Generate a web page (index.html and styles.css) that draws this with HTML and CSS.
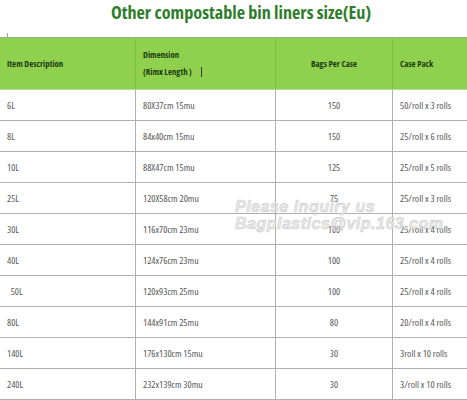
FILE: index.html
```
<!DOCTYPE html>
<html>
<head>
<meta charset="utf-8">
<link rel="stylesheet" href="styles.css">
</head>
<body>
<div class="page">
  <h1 class="title">Other compostable bin liners size(Eu)</h1>
  <div class="tick"></div>
  <table class="sizes">
    <colgroup>
      <col class="c1"><col class="c2"><col class="c3"><col class="c4">
    </colgroup>
    <thead>
      <tr>
        <th>Item Description</th>
        <th class="dim"><div>Dimension</div><div>(Rimx Length）<span class="cursor"></span></div></th>
        <th class="num">Bags Per Case</th>
        <th>Case Pack</th>
      </tr>
    </thead>
    <tbody>
      <tr><td>6L</td><td>80X37cm 15mu</td><td class="num">150</td><td>50/roll x 3 rolls</td></tr>
      <tr><td>8L</td><td>84x40cm 15mu</td><td class="num">150</td><td>25/roll x 6 rolls</td></tr>
      <tr><td>10L</td><td>88X47cm 15mu</td><td class="num">125</td><td>25/roll x 5 rolls</td></tr>
      <tr><td>25L</td><td>120X58cm 20mu</td><td class="num">75</td><td>25/roll x 3 rolls</td></tr>
      <tr><td>30L</td><td>116x70cm 23mu</td><td class="num">100</td><td>25/roll x 4 rolls</td></tr>
      <tr><td>40L</td><td>124x76cm 23mu</td><td class="num">100</td><td>25/roll x 4 rolls</td></tr>
      <tr><td>&nbsp;&nbsp;50L</td><td>120x93cm 25mu</td><td class="num">100</td><td>25/roll x 4 rolls</td></tr>
      <tr><td>80L</td><td>144x91cm 25mu</td><td class="num">80</td><td>20/roll x 4 rolls</td></tr>
      <tr><td>140L</td><td>176x130cm 15mu</td><td class="num">30</td><td>3roll x 10 rolls</td></tr>
      <tr><td>240L</td><td>232x139cm 30mu</td><td class="num">30</td><td>3/roll x 10 rolls</td></tr>
    </tbody>
  </table>
  <div class="watermark">
    <div>Please inquiry us</div>
    <div>Bagplastics@vip.163.com</div>
  </div>
</div>
</body>
</html>
```

FILE: styles.css
```
html, body {
  margin: 0;
  padding: 0;
  background: #ffffff;
  overflow: hidden;
}
.page {
  position: relative;
  width: 467px;
  height: 400px;
  overflow: hidden;
}
.title {
  margin: 0;
  height: 33px;
  padding-left: 15px;
  text-align: center;
  font-family: "Open Sans", "Liberation Sans", sans-serif;
  font-stretch: 75%;
  font-weight: 700;
  font-size: 18.2px;
  line-height: 24px;
  color: #2e7d2b;
}
.tick {
  width: 1px;
  height: 4px;
  margin-left: 7px;
  background: #a0a0a0;
}
.sizes {
  border-collapse: collapse;
  table-layout: fixed;
  width: 520px;
  margin-left: -1px;
  font-family: "Open Sans", "Liberation Sans", sans-serif;
  font-stretch: 75%;
}
.c1 { width: 136px; }
.c2 { width: 140px; }
.c3 { width: 117px; }
.c4 { width: 127px; }
.sizes th {
  height: 51px;
  padding: 0 0 0 7px;
  background: #8fd14f;
  border-top: 1px solid #9aa890;
  border-left: 1px solid #7fbf45;
  border-bottom: 1px solid #b8d8a0;
  text-align: left;
  font-size: 8.8px;
  font-weight: 700;
  color: #1d3a10;
}
.sizes th.num, .sizes td.num {
  text-align: center;
  padding-left: 0;
}
.sizes th.dim div {
  line-height: 17px;
}
.cursor {
  display: inline-block;
  width: 1px;
  height: 10px;
  margin-left: 4px;
  background: #333;
  vertical-align: -2px;
}
.sizes td {
  height: 30px;
  padding: 0 0 0 7px;
  border: 1px solid #b0b0b0;
  font-size: 9.8px;
  color: #575757;
  white-space: nowrap;
}
.watermark {
  position: absolute;
  left: 235px;
  top: 198px;
  font-family: "Liberation Sans", Arial, sans-serif;
  font-style: italic;
  font-weight: 700;
  font-size: 16px;
  line-height: 17px;
  color: rgba(232, 232, 232, 0.9);
  -webkit-text-stroke: 0.6px rgba(200, 200, 200, 0.9);
  letter-spacing: 0.5px;
}
```
